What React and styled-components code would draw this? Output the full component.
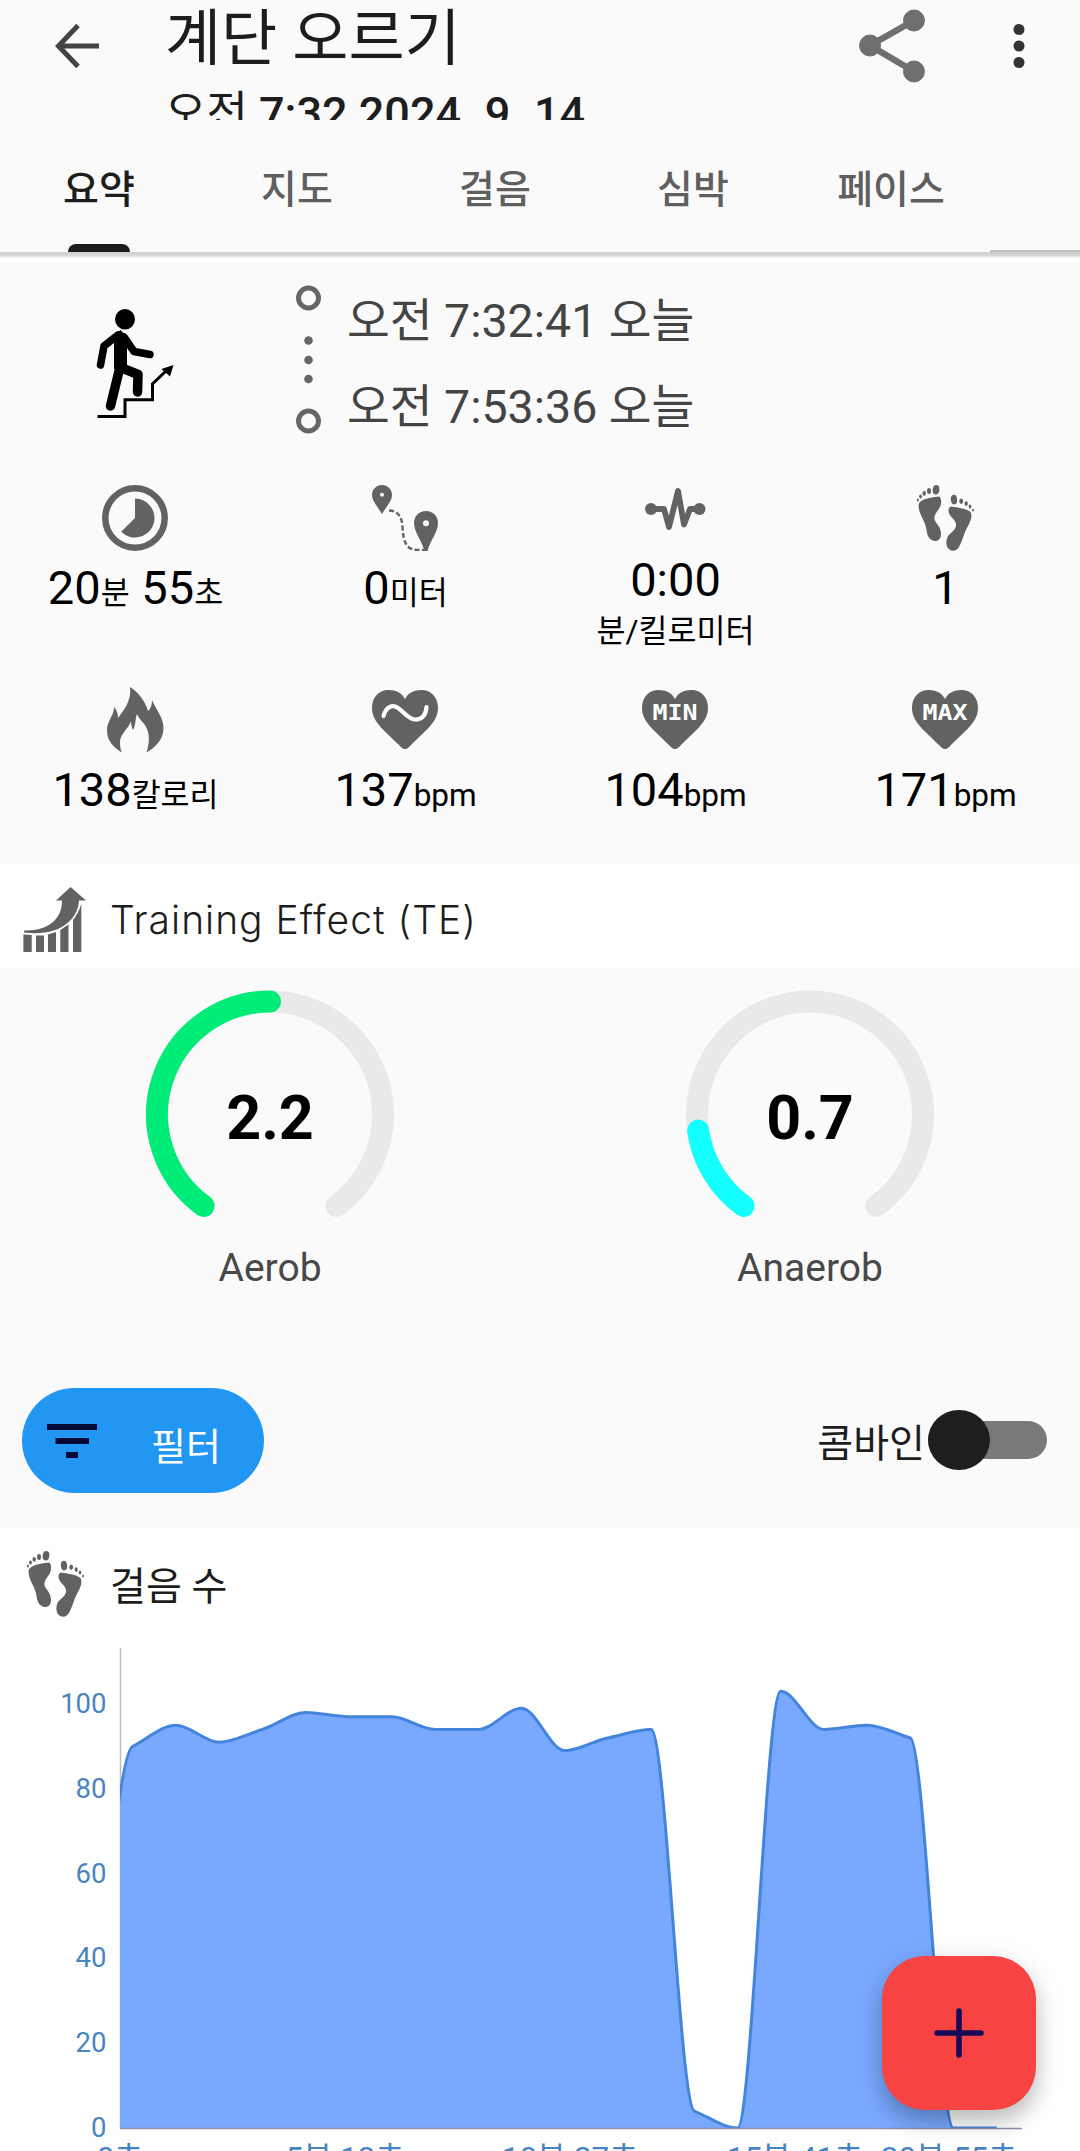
import React from 'react';
import styled, { createGlobalStyle } from 'styled-components';

const GlobalStyle = createGlobalStyle`
  * {
    box-sizing: border-box;
  }
  body {
    margin: 0;
    background: #fafafa;
    font-family: Roboto, "Noto Sans CJK KR", sans-serif;
    color: #1d1d1d;
  }
  svg {
    display: block;
  }
`;

const Screen = styled.div`
  width: 1080px;
  height: 2151px;
  overflow: hidden;
  background: #fafafa;
`;

const Header = styled.header`
  display: flex;
  align-items: flex-start;
  height: 120px;
  padding: 7px 55px 0 52px;
  overflow: hidden;
`;

const BackIcon = styled.svg`
  margin: 14px 61px 0 0;
`;

const Titles = styled.div`
  flex: 1;
  padding-top: 2px;
`;

const Title = styled.h1`
  margin: 0;
  font-size: 61px;
  line-height: 60px;
  font-weight: 400;
`;

const Subtitle = styled.div`
  margin-top: 23px;
  font-size: 45px;
  line-height: 44px;
  font-weight: 500;
  white-space: pre;
`;

const HourMark = styled.span`
  font-weight: 400;
`;

const HeaderActions = styled.div`
  display: flex;
  align-items: center;
  gap: 87px;
`;

const Tabs = styled.nav`
  display: flex;
  height: 132px;
`;

const Tab = styled.button`
  display: flex;
  flex-direction: column;
  align-items: center;
  justify-content: space-between;
  width: 198px;
  padding: 50px 0 0;
  border: 0;
  background: none;
  font: inherit;
  font-size: 39px;
  line-height: 40px;
  font-weight: 500;
  color: ${props => (props.$active ? '#1d1d1d' : '#5f5f5f')};
`;

const Indicator = styled.span`
  width: 62px;
  height: 8px;
  border-radius: 8px 8px 0 0;
  background: #1d1d1d;
`;

const BarShadow = styled.div`
  display: flex;
  justify-content: flex-end;
  height: 11px;
  background: linear-gradient(#cfcfcf 0, #d6d6d6 3px, #f0f0f0 5px, #fff 7px);
`;

const BarShadowEnd = styled.div`
  width: 90px;
  height: 6px;
  margin-top: -2px;
  background: linear-gradient(#bcbcbc, #dcdcdc);
`;

const TimeRow = styled.section`
  display: flex;
  height: 222px;
  padding: 16px 0 0 96px;
`;

const StairsIcon = styled.svg`
  margin: 28px 120px 0 0;
`;

const TimelineIcon = styled.svg`
  margin: 5px 25px 0 0;
`;

const Times = styled.div`
  margin-top: -1px;
`;

const TimeText = styled.div`
  font-size: 46.5px;
  line-height: 86px;
  color: #444;
`;

const Stats = styled.section`
  display: grid;
  grid-template-columns: repeat(4, 270px);
  grid-template-rows: 202px 177px;
`;

const Stat = styled.div`
  display: flex;
  flex-direction: column;
  align-items: center;
  margin-top: ${props => (props.$stacked ? '-8px' : '0')};
`;

const StatValue = styled.div`
  margin-top: 12px;
  padding-left: 1px;
  font-size: 47px;
  line-height: 50px;
  color: #000;
  white-space: pre;
`;

const Unit = styled.span`
  font-size: 31.5px;
  line-height: 1;
`;

const UnitLine = styled.div`
  margin-top: 8px;
  padding-left: 1px;
  font-size: 31.5px;
  line-height: 38px;
  color: #000;
`;

const SectionHead = styled.div`
  display: flex;
  align-items: center;
  height: 104px;
  padding: 7px 0 0 22px;
  gap: 22px;
  background: #fff;
`;

const SectionTitle = styled.h2`
  margin: 0;
  font-family: ${props => (props.$latin ? 'Inter, sans-serif' : 'inherit')};
  font-size: 39px;
  line-height: 46px;
  font-weight: ${props => (props.$latin ? 300 : 400)};
  letter-spacing: ${props => (props.$latin ? '1px' : '0')};
  color: #1d1d1d;
`;

const Gauges = styled.section`
  display: grid;
  grid-template-columns: 1fr 1fr;
  height: 420px;
  padding-top: 22px;
`;

const GaugeCell = styled.div`
  display: flex;
  flex-direction: column;
  align-items: center;
`;

const GaugeNumber = styled.text`
  font-size: 61px;
  font-weight: 700;
  fill: #000;
  text-anchor: middle;
`;

const GaugeLabel = styled.div`
  margin-top: 24px;
  font-size: 39px;
  line-height: 44px;
  color: #484848;
`;

const Controls = styled.section`
  display: flex;
  justify-content: space-between;
  align-items: flex-start;
  height: 140px;
  padding: 0 33px 0 22px;
`;

const FilterButton = styled.button`
  display: flex;
  align-items: center;
  width: 242px;
  height: 105px;
  padding: 0 0 0 25px;
  gap: 54px;
  border: 0;
  border-radius: 53px;
  background: #2196f3;
  color: #fff;
  font: inherit;
  font-size: 38px;
  line-height: 40px;
`;

const FilterText = styled.span`
  padding-top: 13px;
`;

const Combine = styled.label`
  display: flex;
  align-items: center;
  height: 104px;
  gap: 3px;
  font-size: 39px;
  line-height: 40px;
`;

const CombineText = styled.span`
  padding-top: 7px;
`;

const Track = styled.span`
  display: flex;
  align-items: center;
  width: 119px;
  height: 38px;
  border-radius: 19px;
  background: #797979;
`;

const Thumb = styled.span`
  width: 62px;
  height: 60px;
  border-radius: 50%;
  background: #1e1e1e;
`;

const ChartSection = styled.section`
  height: 623px;
  background: #fff;
`;

const StepsHead = styled(SectionHead)`
  height: 112px;
  padding-top: 0;
`;

const StepsTitle = styled(SectionTitle)`
  padding-top: 6px;
`;

const AxisText = styled.text`
  font-size: ${props => (props.$anchor === 'end' ? 27.5 : 31.5)}px;
  fill: #4a84c0;
  text-anchor: ${props => props.$anchor};
`;

const BadgeText = styled.text`
  font-family: "DejaVu Sans Mono", monospace;
  font-size: 22px;
  font-weight: 700;
  fill: #fff;
  text-anchor: middle;
`;

const Fab = styled.button`
  position: absolute;
  left: 882px;
  top: 1956px;
  display: flex;
  align-items: center;
  justify-content: center;
  width: 154px;
  height: 154px;
  padding: 0;
  border: 0;
  border-radius: 43px;
  background: #f74341;
  box-shadow: 0 12px 20px rgba(0, 0, 0, 0.2), 0 6px 34px rgba(0, 0, 0, 0.1);
`;

const GREY = '#626262';

const Icon = ({ children }) => (
  <svg width="66" height="66" viewBox="0 0 66 66" fill={GREY}>
    {children}
  </svg>
);

const DurationIcon = () => (
  <Icon>
    <circle cx="33" cy="33" r="29.7" fill="none" stroke={GREY} strokeWidth="6.5" />
    <path d="M33 13.5A19.5 19.5 0 1 1 19.2 46.8L33 33Z" />
  </Icon>
);

const RouteIcon = () => (
  <Icon>
    <path
      fillRule="evenodd"
      d="M10 0C15.6 0 20 4.4 20 10C20 16 14 22 10 29C6 22 0 16 0 10C0 4.4 4.4 0 10 0ZM10 7.7A2 2 0 1 0 10 11.7A2 2 0 1 0 10 7.7Z"
    />
    <path
      fillRule="evenodd"
      d="M54 26C61 26 66 31 66 38C66 47 58 56 55.5 66H52.5C50 56 42 47 42 38C42 31 47 26 54 26ZM54 35.2A3 3 0 1 0 54 41.2A3 3 0 1 0 54 35.2Z"
    />
    <path
      d="M17 25.5C27 26 30 33 30.5 42C31.5 57 34 65 46 65H53"
      fill="none"
      stroke={GREY}
      strokeWidth="2.4"
      strokeDasharray="5 2.4"
    />
  </Icon>
);

const PulseIcon = () => (
  <Icon>
    <circle cx="9" cy="32" r="6" />
    <circle cx="57.5" cy="32" r="6" />
    <path
      d="M9 32H22L27 50L36 14L42 47.5L48 32H57"
      fill="none"
      stroke={GREY}
      strokeWidth="5.8"
      strokeLinejoin="round"
    />
  </Icon>
);

const FeetIcon = () => (
  <Icon>
    <ellipse cx="24" cy="4.8" rx="3.3" ry="4.8" transform="rotate(8 24 4.8)" />
    <ellipse cx="17" cy="6" rx="2" ry="2.9" />
    <ellipse cx="12.2" cy="8.4" rx="1.7" ry="2.4" />
    <ellipse cx="8.5" cy="11.4" rx="1.4" ry="2" />
    <ellipse cx="5.9" cy="15" rx="1" ry="1.6" />
    <path d="M8 17C12 13 22 12 27 11.5C30 13 29.5 19 28 22C26 26 22 29 22.5 34C23 38 29 41 29 49C29 54 26 56.5 22.5 56C17 55 15 50 14.5 45C13.5 36 7 30 6.5 21Q6.5 18 8 17Z" />
    <ellipse cx="42" cy="14.6" rx="3.1" ry="4.8" transform="rotate(-6 42 14.6)" />
    <ellipse cx="49.2" cy="16.2" rx="1.9" ry="2.7" />
    <ellipse cx="54.2" cy="18.6" rx="1.6" ry="2.3" />
    <ellipse cx="58" cy="21.5" rx="1.3" ry="1.9" />
    <ellipse cx="61" cy="25" rx="0.9" ry="1.5" />
    <path d="M39 21.5C44 22.500 54 23 58.5 27C60.5 30 59 36 56 41C52 48 51 54 48 60C46 65 42 67 38 65C33 62 34 55 36 51C39 47 44.500 45 44 39C43.500 34 37 32 36.5 26Q36.5 22 39 21.5Z" />
  </Icon>
);

const FlameIcon = () => (
  <Icon>
    <path d="M28 0C35 4 43 13 46 24C49 21 50 18 50 13C54 23 61.5 30 61.5 41C61.5 52 54 60 44.5 65.5C47 58 48 49 45 42C43 36 37 33 35 27C33 32 34 38 31 43C30 41 29 38 29 34C26 43 17 47 18 57Q18 62 20 65.5C11 60 5 54 5 43C5 34 12 29 12 20C15 23 16 27 16 31C21 24 30 14 28 0Z" />
  </Icon>
);

const HeartIcon = ({ label }) => (
  <Icon>
    <path d="M33 62C35.5 62 37 60 39 58C53 44 66 35 66 21C66 10 59 3 49.5 3C42 3 36 6 33 12C30 6 24 3 16.5 3C7 3 0 10 0 21C0 35 13 44 27 58C29 60 30.5 62 33 62Z" />
    {label ? (
      <BadgeText x="33" y="33" textLength="45" lengthAdjust="spacingAndGlyphs">{label}</BadgeText>
    ) : (
      <path
        d="M11.5 29C14 20 20 17 26 21C32 25 36 32 43 32.5C50 33 54 28 54.5 20"
        fill="none"
        stroke="#fff"
        strokeWidth="4.2"
        strokeLinecap="round"
      />
    )}
  </Icon>
);

const GrowthIcon = () => (
  <Icon>
    <path d="M48.6 0L64 13.5H57C56 33 37 50 2 45.5V43.500C28 44 40 31 40 13.5H34Z" />
    <path d="M1.4 47.5L9.7 48V65H1.4ZM14 48.5H22V65H14ZM26 47.5L34 45V65H26ZM38.3 43L46.5 37.5V65H38.3ZM51 33Q56 27 59.3 17V65H51Z" />
  </Icon>
);

const STATS = [
  { icon: <DurationIcon />, parts: [['20', '분'], [' 55', '초']] },
  { icon: <RouteIcon />, parts: [['0', '미터']] },
  { icon: <PulseIcon />, parts: [['0:00', '']], below: '분/킬로미터' },
  { icon: <FeetIcon />, parts: [['1', '']] },
  { icon: <FlameIcon />, parts: [['138', '칼로리']] },
  { icon: <HeartIcon />, parts: [['137', 'bpm']] },
  { icon: <HeartIcon label="MIN" />, parts: [['104', 'bpm']] },
  { icon: <HeartIcon label="MAX" />, parts: [['171', 'bpm']] },
];

// the ring is open at the bottom: 288 degrees, starting at 126
const arc = fraction => {
  const point = deg => {
    const rad = (deg * Math.PI) / 180;
    return `${(124 + 113 * Math.cos(rad)).toFixed(2)} ${(124.5 + 113 * Math.sin(rad)).toFixed(2)}`;
  };
  const sweep = 288 * fraction;
  return `M${point(126)}A113 113 0 ${sweep > 180 ? 1 : 0} 1 ${point(126 + sweep)}`;
};

const Gauge = ({ value, label, color }) => (
  <GaugeCell>
    <svg width="248" height="232" viewBox="0 0 248 232" fill="none" strokeWidth="22" strokeLinecap="round">
      <path d={arc(1)} stroke="#e9e9e9" />
      <path d={arc(value / 4.4)} stroke={color} />
      <GaugeNumber x="124" y="149">{value}</GaugeNumber>
    </svg>
    <GaugeLabel>{label}</GaugeLabel>
  </GaugeCell>
);

const STEPS = [0, 90, 95, 91, 94, 98, 97, 97, 94, 94, 99, 89, 92, 94, 4, 0, 103, 94, 95, 92, 0, 0];
const TIMES = [
  [120, '0초'],
  [345, '5분 13초'],
  [570, '10분 27초'],
  [795, '15분 41초'],
  [949, '20분 55초'],
];
const BASE = 488;
const STEP_WIDTH = 43.2;

const px = i => 89.5 + i * STEP_WIDTH;
const py = v => BASE - v * 4.24;

// monotone cubic: the line never overshoots a sample
const slope = i => {
  const before = STEPS[i] - STEPS[i - 1];
  const after = STEPS[i + 1] - STEPS[i];
  if (i === 0) return after * 1.5;
  if (i === STEPS.length - 1) return 0;
  if (before * after <= 0) return 0;
  return Math.sign(after) * Math.min(Math.abs(before), Math.abs(after));
};

const curve = () => {
  let d = `M${px(0)} ${py(STEPS[0])}`;
  for (let i = 1; i < STEPS.length; i++) {
    const x1 = px(i - 1) + STEP_WIDTH / 3;
    const y1 = py(STEPS[i - 1] + slope(i - 1) / 3);
    const x2 = px(i) - STEP_WIDTH / 3;
    const y2 = py(STEPS[i] - slope(i) / 3);
    d += `C${x1} ${y1} ${x2} ${y2} ${px(i)} ${py(STEPS[i])}`;
  }
  return d;
};

const StepsChart = () => {
  const line = curve();
  return (
    <svg width="1080" height="511" viewBox="0 0 1080 511">
      <clipPath id="plot">
        <rect x="120" y="0" width="902" height={BASE + 1} />
      </clipPath>
      <path d="M120.5 8V489" stroke="#bdbdbd" strokeWidth="1.5" />
      <g clipPath="url(#plot)">
        <path d={`${line}V${BASE}H89Z`} fill="#79a9fe" />
        <path d={line} fill="none" stroke="#4384dc" strokeWidth="3" />
      </g>
      <path d="M120 488.5H1022" stroke="#8a8fae" strokeWidth="1.5" />
      {[0, 20, 40, 60, 80, 100].map(v => (
        <AxisText key={v} x="106.5" y={py(v) + 9} $anchor="end">{v}</AxisText>
      ))}
      {TIMES.map(([x, label]) => (
        <AxisText key={label} x={x} y="529" $anchor="middle">{label}</AxisText>
      ))}
    </svg>
  );
};

const App = () => {
  return (
    <Screen>
      <GlobalStyle />
      <Header>
        <BackIcon width="52" height="52" viewBox="0 0 52 52" fill="none" stroke="#444" strokeWidth="5">
          <path d="M47 25H8M26 4.5L6.5 25L26 45.5" />
        </BackIcon>
        <Titles>
          <Title>계단 오르기</Title>
          <Subtitle><HourMark>오전</HourMark> 7:32 2024. 9. 14</Subtitle>
        </Titles>
        <HeaderActions>
          <svg width="68" height="78" viewBox="0 0 68 78" fill="#6f6f6f" stroke="#6f6f6f">
            <path d="M56 13.5L12 38.5L56 64.5" fill="none" strokeWidth="6.5" />
            <circle cx="56" cy="13.5" r="10.5" />
            <circle cx="12" cy="38.5" r="10.5" />
            <circle cx="56" cy="64.5" r="10.5" />
          </svg>
          <svg width="12" height="50" viewBox="0 0 12 50" fill="#333">
            <circle cx="6" cy="8.5" r="5.5" />
            <circle cx="6" cy="25" r="5.5" />
            <circle cx="6" cy="41.5" r="5.5" />
          </svg>
        </HeaderActions>
      </Header>
      <Tabs>
        {['요약', '지도', '걸음', '심박', '페이스'].map((name, i) => (
          <Tab key={name} $active={i === 0}>
            {name}
            {i === 0 && <Indicator />}
          </Tab>
        ))}
      </Tabs>
      <BarShadow>
        <BarShadowEnd />
      </BarShadow>

      <TimeRow>
        <StairsIcon width="80" height="114" viewBox="0 0 80 114" fill="none" stroke="#000" strokeLinecap="round" strokeLinejoin="round">
          <ellipse cx="29" cy="12.3" rx="10" ry="10.3" fill="#000" stroke="none" />
          <path d="M24.5 23L18 29V62H31V36L32 31Z" fill="#000" stroke="none" />
          <path d="M22 28L8 39L4.500 58M28 30L38 44.5L54 47.5" strokeWidth="7.5" />
          <path d="M24 60L14.5 99M26 61L42 67.5L41.5 85" strokeWidth="9.5" />
          <path d="M1.5 109.5H29V92.7H56.5V77L71 63" strokeWidth="3" strokeLinecap="butt" strokeLinejoin="miter" />
          <path d="M77.5 58L65.5 62L74 69.5Z" fill="#000" stroke="none" />
        </StairsIcon>
        <TimelineIcon width="26" height="150" viewBox="0 0 26 150" fill="#666">
          <circle cx="12.5" cy="14" r="10" fill="none" stroke="#666" strokeWidth="5" />
          <circle cx="12.5" cy="56.5" r="4.3" />
          <circle cx="12.5" cy="76" r="4.3" />
          <circle cx="12.5" cy="95" r="4.3" />
          <circle cx="12.5" cy="137" r="10" fill="none" stroke="#666" strokeWidth="5" />
        </TimelineIcon>
        <Times>
          <TimeText>오전 7:32:41 오늘</TimeText>
          <TimeText>오전 7:53:36 오늘</TimeText>
        </Times>
      </TimeRow>

      <Stats>
        {STATS.map((stat, i) => (
          <Stat key={i} $stacked={!!stat.below}>
            {stat.icon}
            <StatValue>
              {stat.parts.map(([value, unit]) => (
                <React.Fragment key={value}>
                  {value}
                  <Unit>{unit}</Unit>
                </React.Fragment>
              ))}
            </StatValue>
            {stat.below && <UnitLine>{stat.below}</UnitLine>}
          </Stat>
        ))}
      </Stats>

      <SectionHead>
        <GrowthIcon />
        <SectionTitle $latin>Training Effect (TE)</SectionTitle>
      </SectionHead>
      <Gauges>
        <Gauge value={2.2} label="Aerob" color="#00ec78" />
        <Gauge value={0.7} label="Anaerob" color="#14ffff" />
      </Gauges>

      <Controls>
        <FilterButton>
          <svg width="50" height="34" viewBox="0 0 50 34" fill="#020a34">
            <path d="M0 0H50V6H0ZM8.5 14H42V20H8.5ZM19 28H31V34H19Z" />
          </svg>
          <FilterText>필터</FilterText>
        </FilterButton>
        <Combine>
          <CombineText>콤바인</CombineText>
          <Track>
            <Thumb />
          </Track>
        </Combine>
      </Controls>

      <ChartSection>
        <StepsHead>
          <FeetIcon />
          <StepsTitle>걸음 수</StepsTitle>
        </StepsHead>
        <StepsChart />
      </ChartSection>

      <Fab aria-label="추가">
        <svg width="50" height="50" viewBox="0 0 50 50" stroke="#180a58" strokeWidth="5.6" strokeLinecap="round">
          <path d="M25 3V47M3 25H47" />
        </svg>
      </Fab>
    </Screen>
  );
};

export default App;
